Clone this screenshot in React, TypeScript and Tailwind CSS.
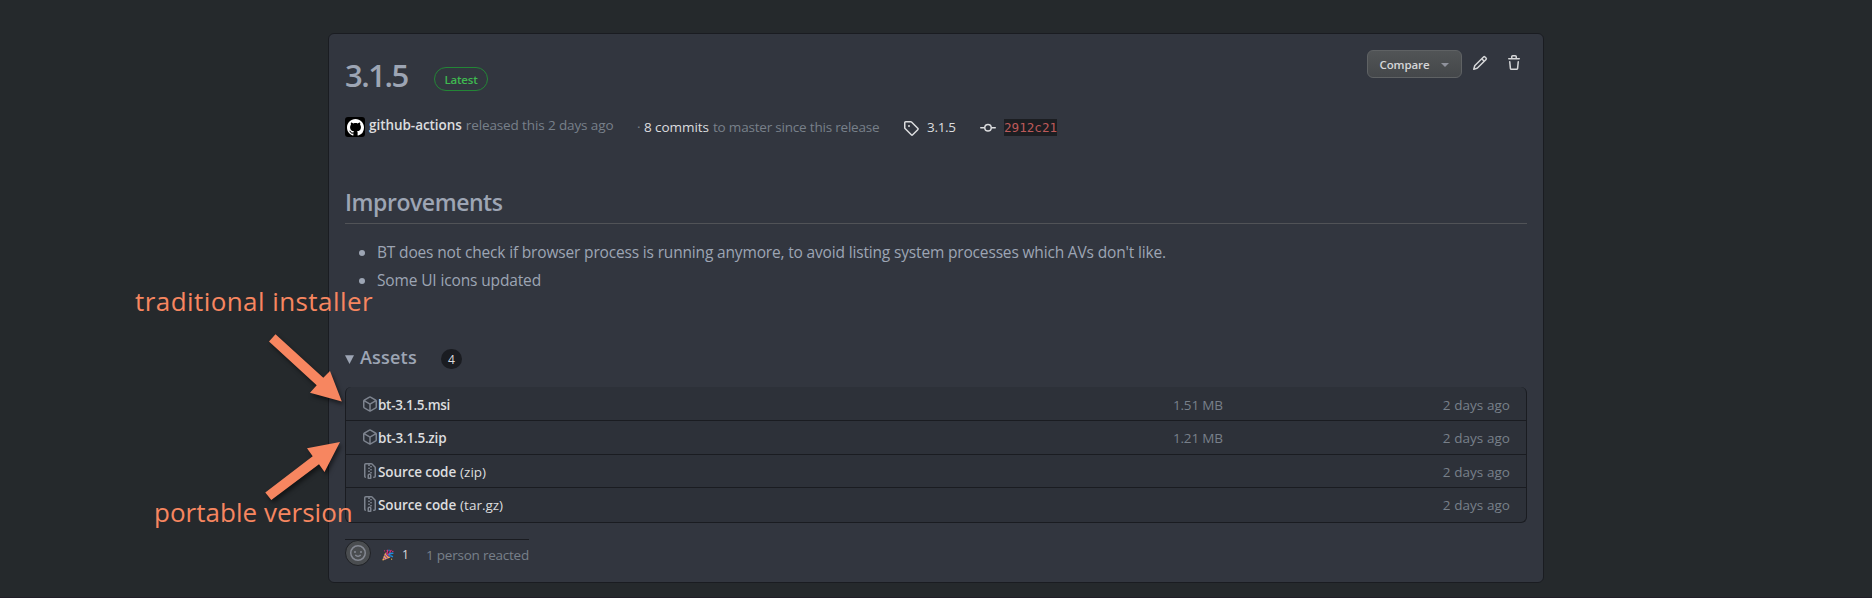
import React from 'react';

const PATHS = {
  tag: 'M2.5 7.775V2.75a.25.25 0 01.25-.25h5.025a.25.25 0 01.177.073l6.25 6.25a.25.25 0 010 .354l-5.025 5.025a.25.25 0 01-.354 0l-6.25-6.25a.25.25 0 01-.073-.177zm-1.5 0V2.75C1 1.784 1.784 1 2.75 1h5.025c.464 0 .91.184 1.238.513l6.25 6.25a1.75 1.75 0 010 2.474l-5.026 5.026a1.75 1.75 0 01-2.474 0l-6.25-6.25A1.75 1.75 0 011 7.775zM6 5a1 1 0 100 2 1 1 0 000-2z',
  commit: 'M10.5 7.75a2.5 2.5 0 11-5 0 2.5 2.5 0 015 0zm1.43.75a4.002 4.002 0 01-7.86 0H.75a.75.75 0 110-1.5h3.32a4.001 4.001 0 017.86 0h3.32a.75.75 0 110 1.5h-3.32z',
  pencil: 'M11.013 1.427a1.75 1.75 0 012.474 0l1.086 1.086a1.75 1.75 0 010 2.474l-8.61 8.61c-.21.21-.47.364-.756.445l-3.251.93a.75.75 0 01-.927-.928l.929-3.25a1.75 1.75 0 01.445-.758l8.61-8.61zm1.414 1.06a.25.25 0 00-.354 0L10.811 3.75l1.439 1.44 1.263-1.263a.25.25 0 000-.354l-1.086-1.086zM11.189 6.25L9.75 4.81l-6.286 6.287a.25.25 0 00-.064.108l-.558 1.953 1.953-.558a.249.249 0 00.108-.064l6.286-6.286z',
  trash: 'M6.5 1.75a.25.25 0 01.25-.25h2.5a.25.25 0 01.25.25V3h-3V1.75zm4.5 0V3h2.25a.75.75 0 010 1.5H2.75a.75.75 0 010-1.5H5V1.75C5 .784 5.784 0 6.75 0h2.5C10.216 0 11 .784 11 1.75zM4.496 6.675a.75.75 0 10-1.492.15l.66 6.6A1.75 1.75 0 005.405 15h5.19c.9 0 1.652-.681 1.741-1.576l.66-6.6a.75.75 0 00-1.492-.149l-.66 6.6a.25.25 0 01-.249.225h-5.19a.25.25 0 01-.249-.225l-.66-6.6z',
  package: 'M8.878.392a1.75 1.75 0 00-1.756 0l-5.25 3.045A1.75 1.75 0 001 4.951v6.098c0 .624.332 1.2.872 1.514l5.25 3.045a1.75 1.75 0 001.756 0l5.25-3.045c.54-.313.872-.89.872-1.514V4.951c0-.624-.332-1.2-.872-1.514L8.878.392zM7.875 1.69a.25.25 0 01.25 0l4.63 2.685L8 7.133 3.245 4.375l4.63-2.685zM2.5 5.677v5.372c0 .09.047.171.125.216l4.625 2.683V8.432L2.5 5.677zm6.25 8.271l4.625-2.683a.25.25 0 00.125-.216V5.677L8.75 8.432v5.516z',
  zip: 'M3.5 1.75a.25.25 0 01.25-.25h3a.75.75 0 000 1.5h.5a.75.75 0 000-1.5h2.086a.25.25 0 01.177.073l2.914 2.914a.25.25 0 01.073.177v8.586a.25.25 0 01-.25.25h-.5a.75.75 0 000 1.5h.5A1.75 1.75 0 0014 13.25V4.664c0-.464-.184-.909-.513-1.237L10.573.513A1.75 1.75 0 009.336 0H3.75A1.75 1.75 0 002 1.75v11.5c0 .649.353 1.214.874 1.515a.75.75 0 10.752-1.298.25.25 0 01-.126-.217V1.75zM8.75 3a.75.75 0 000 1.5h.5a.75.75 0 000-1.5h-.5zM6 5.25a.75.75 0 01.75-.75h.5a.75.75 0 010 1.5h-.5A.75.75 0 016 5.25zm2 1.5A.75.75 0 018.75 6h.5a.75.75 0 010 1.5h-.5A.75.75 0 018 6.75zm-1.25.75a.75.75 0 000 1.5h.5a.75.75 0 000-1.5h-.5zM8 9.75A.75.75 0 018.75 9h.5a.75.75 0 010 1.5h-.5A.75.75 0 018 9.75zm-.75.75a1.75 1.75 0 00-1.75 1.75v3c0 .414.336.75.75.75h2.5a.75.75 0 00.75-.75v-3a1.75 1.75 0 00-1.75-1.75h-.5zM7 12.25a.25.25 0 01.25-.25h.5a.25.25 0 01.25.25v2.25H7v-2.25z',
  smiley: 'M1.5 8a6.5 6.5 0 1113 0 6.5 6.5 0 01-13 0zM8 0a8 8 0 100 16A8 8 0 008 0zM5 8a1 1 0 100-2 1 1 0 000 2zm7-1a1 1 0 11-2 0 1 1 0 012 0zM5.32 9.636a.75.75 0 011.038.175l.007.009c.103.118.22.222.35.31.264.178.683.37 1.285.37.602 0 1.02-.192 1.285-.371.13-.088.247-.192.35-.31l.007-.008a.75.75 0 111.222.87c-.16.23-.4.47-.736.686-.63.418-1.37.638-2.127.629-.946 0-1.652-.308-2.126-.63a3.32 3.32 0 01-.736-.686.75.75 0 01.183-1.044z',
  github: 'M8 0C3.58 0 0 3.58 0 8c0 3.54 2.29 6.53 5.47 7.59.4.07.55-.17.55-.38 0-.19-.01-.82-.01-1.49-2.01.37-2.53-.49-2.69-.94-.09-.23-.48-.94-.82-1.13-.28-.15-.68-.52-.01-.53.63-.01 1.08.58 1.23.82.72 1.21 1.87.87 2.33.66.07-.52.28-.87.51-1.07-1.78-.2-3.64-.89-3.64-3.95 0-.87.31-1.59.82-2.15-.08-.2-.36-1.02.08-2.12 0 0 .67-.21 2.2.82.64-.18 1.32-.27 2-.27.68 0 1.36.09 2 .27 1.53-1.04 2.2-.82 2.2-.82.44 1.1.16 1.92.08 2.12.51.56.82 1.27.82 2.15 0 3.07-1.87 3.75-3.65 3.95.29.25.54.73.54 1.48 0 1.07-.01 1.93-.01 2.2 0 .21.15.46.55.38A8.013 8.013 0 0016 8c0-4.42-3.58-8-8-8z',
};

function Icon({ name, className = '' }: { name: keyof typeof PATHS; className?: string }) {
  return (
    <svg viewBox="0 0 16 16" fill="currentColor" fillRule="evenodd" className={`shrink-0 ${className}`}>
      <path d={PATHS[name]} />
    </svg>
  );
}

function PartyPopper() {
  return (
    <svg viewBox="0 0 12 12" className="h-3 w-3 shrink-0">
      <path d="M3.2 3.6 8.4 8.6 1 11.6Q.3 11.6.4 10.8Z" fill="#f0b44c" />
      <path d="M2.4 5.8 5.6 9.7M1.4 8.6 3.2 10.7" stroke="#8e3fa8" strokeWidth="1.1" />
      <path d="M3.2 3.6Q5.4 3.6 8.4 8.6Q4.6 7.6 3.2 3.6Z" fill="#8b2f73" />
      <path d="M4.4 4.2Q6.4 3 5 .8M5.2 5Q8 5.4 8 3.2Q8 1.6 9.6 1.4" fill="none" stroke="#e0307c" strokeWidth="1.3" />
      <path d="M6.4 6Q8.4 3.8 11.4 4.4M7.4 7Q9.6 6.4 10.8 8" fill="none" stroke="#1f8fe0" strokeWidth="1.3" />
      <circle cx="7" cy="1.2" r=".7" fill="#1f8fe0" />
      <circle cx="10.8" cy="2.4" r=".7" fill="#e0307c" />
      <circle cx="2.6" cy="1.8" r=".6" fill="#e0307c" />
      <circle cx="9.6" cy="10.2" r=".6" fill="#f0b44c" />
    </svg>
  );
}

type Asset = {
  name: string;
  suffix?: string;
  size?: string;
  icon: 'package' | 'zip';
  row: string;
  nameClass: string;
};

const ASSETS: Asset[] = [
  { name: 'bt-3.1.5.msi', size: '1.51 MB', icon: 'package', row: 'h-[34px] border-b pt-2', nameClass: 'tracking-[-0.3px]' },
  { name: 'bt-3.1.5.zip', size: '1.21 MB', icon: 'package', row: 'h-[34px] border-b pt-[7px]', nameClass: 'tracking-[-0.22px]' },
  { name: 'Source code', suffix: '(zip)', icon: 'zip', row: 'h-[33px] border-b pt-[7px]', nameClass: 'tracking-[-0.1px]' },
  { name: 'Source code', suffix: '(tar.gz)', icon: 'zip', row: 'h-[34px] pt-[7px]', nameClass: 'tracking-[-0.1px]' },
];

function AssetRow({ asset }: { asset: Asset }) {
  return (
    <li className={`flex items-start border-[#1a1c21] pr-4 pl-4 leading-5 ${asset.row}`}>
      <Icon name={asset.icon} className="mt-px h-4 w-4 text-[#7d838e]" />
      <div className="flex flex-1 gap-1 text-[#dcdddf]">
        <span className={`font-semibold ${asset.nameClass}`}>{asset.name}</span>
        {asset.suffix && <span>{asset.suffix}</span>}
      </div>
      <span className="w-[60px] tracking-[-0.2px]">{asset.size}</span>
      <span className="w-[277px] text-right tracking-[0.05px]">2 days ago</span>
    </li>
  );
}

function ReleaseCard() {
  return (
    <main className="h-[550px] w-[1216px] rounded-md border border-[#1a1c21] bg-[#32363f] px-4 text-[13.5px] text-[#78808a]">
      <header className="flex h-[82px] items-start justify-between">
        <div className="flex pt-[21px]">
          <h1 className="w-[89px] text-[31px] leading-10 font-semibold tracking-[-1.5px] text-[#9da5b4]">3.1.5</h1>
          <span className="mt-3 flex h-6 w-[54px] items-center justify-center rounded-full border border-[#238636] pt-px text-[11.5px] font-semibold tracking-[-0.2px] text-[#3fb950]">
            Latest
          </span>
        </div>
        <div className="flex items-start pt-4 pr-[5px] text-[#d5d6d8]">
          <button className="flex h-7 w-[95px] items-center rounded-md border border-[#5f6264] bg-linear-to-b from-[#515456] to-[#44474a] pl-[11.5px] text-[11.5px] font-semibold tracking-[-0.1px] text-[#d5d6d8]">
            <span className="pt-px">Compare</span>
            <svg viewBox="0 0 8 4" className="mt-px ml-[11.5px] h-1 w-2 fill-[#8f929c]">
              <path d="M0 0h8L4 4z" />
            </svg>
          </button>
          <Icon name="pencil" className="mt-[5px] ml-[10px] h-4 w-4" />
          <Icon name="trash" className="mt-[5px] ml-[18px] h-4 w-4" />
        </div>
      </header>

      <section className="flex h-[68px] items-start leading-5">
        <span className="mt-px flex h-5 w-5 items-center justify-center rounded-[3px] bg-black text-white">
          <Icon name="github" className="h-[17px] w-[17px]" />
        </span>
        <div className="-mt-px flex w-[272px] gap-1 pl-1">
          <span className="font-semibold tracking-[-0.05px] text-[#dcdddf]">github-actions</span>
          <span className="tracking-[-0.12px]">released this 2 days ago</span>
        </div>
        <div className="flex w-[266px] pt-px">
          <span className="w-[7px]">·</span>
          <span className="w-[69px] tracking-[-0.06px] text-[#dcdddf]">8 commits</span>
          <span className="tracking-[-0.2px]">to master since this release</span>
        </div>
        <div className="flex w-[77px] pt-px text-[#dcdddf]">
          <Icon name="tag" className="mt-[3px] mr-2 h-4 w-4" />
          <span className="tracking-[-0.3px]">3.1.5</span>
        </div>
        <div className="flex pt-[3px]">
          <Icon name="commit" className="mt-px mr-2 h-4 w-4 text-[#dcdddf]" />
          <code className="h-[17px] bg-[#1c1e22] font-['DejaVu_Sans_Mono',monospace] text-[12.6px] leading-[17px] text-[#bd5a5a]">2912c21</code>
        </div>
      </section>

      <h2 className="h-10 border-b border-[#515357] text-[23px] leading-9 font-semibold tracking-[-0.45px] text-[#9da5b4]">
        Improvements
      </h2>
      <ul className="mt-4 flex h-[103px] list-disc flex-col gap-1 pl-8 text-[15.5px] leading-6 text-[#9da5b4]">
        <li className="tracking-[-0.165px]">
          BT does not check if browser process is running anymore, to avoid listing system processes which AVs don't like.
        </li>
        <li className="tracking-[-0.14px]">Some UI icons updated</li>
      </ul>

      <div className="flex h-11 items-start">
        <svg viewBox="0 0 9 9" className="mt-[11.5px] h-[9px] w-[9px] fill-[#9da5b4]">
          <path d="M0 .3h9L4.5 9z" />
        </svg>
        <h3 className="w-[87px] pl-[6px] text-lg leading-7 font-semibold tracking-[0.2px] text-[#9da5b4]">Assets</h3>
        <span className="mt-[6px] flex h-5 w-[21px] items-center justify-center rounded-full bg-[#1a1c21] pt-px text-xs font-medium text-[#dcdddf]">
          4
        </span>
      </div>

      <ul className="h-[136px] overflow-hidden rounded-md border-x border-b border-[#1a1c21] bg-[#2d3139]">
        {ASSETS.map((asset, i) => (
          <AssetRow key={i} asset={asset} />
        ))}
      </ul>

      <footer className="mt-4 flex h-7 w-[184px] items-start border-t border-[#1a1c21]">
        <span className="flex h-[26px] w-[26px] shrink-0 items-center justify-center rounded-full border border-[#1f2125] bg-[#4a4d50] text-[#858993]">
          <Icon name="smiley" className="h-4 w-4" />
        </span>
        <span className="mt-[9px] ml-[11px]">
          <PartyPopper />
        </span>
        <span className="mt-[5px] w-[26px] pl-2 text-xs leading-5 text-[#dcdddf]">1</span>
        <span className="mt-[5px] ml-[7px] leading-5 tracking-[-0.23px] whitespace-nowrap">1 person reacted</span>
      </footer>
    </main>
  );
}

function Annotations() {
  return (
    <div className="pointer-events-none absolute inset-0 text-[26px] leading-9 font-medium whitespace-nowrap text-[#f78660]">
      <span className="absolute top-[283px] left-[135px] tracking-[0.43px]">traditional installer</span>
      <span className="absolute top-[494px] left-[154px] tracking-[0.02px]">portable version</span>
      <svg viewBox="0 0 400 598" className="absolute top-0 left-0 h-[598px] w-[400px] fill-[#f78660] drop-shadow-[2px_3px_2px_rgba(0,0,0,0.5)]">
        <path d="M269 341.5 275.5 334.3 323.3 377.7 330 371 341.8 401.5 310 392.7 316.7 385.3Z" />
        <path d="M265.3 492.5 312.7 456.3 307 448.3 340 442 324.5 472 319 464.3 271.3 500Z" />
      </svg>
    </div>
  );
}

export default function App() {
  return (
    <div className="relative flex h-[598px] w-[1872px] items-start justify-center overflow-hidden border-b border-[#211e28] bg-[#25292c] pt-[33px] font-['Open_Sans','Noto_Sans',sans-serif]">
      <ReleaseCard />
      <Annotations />
    </div>
  );
}
